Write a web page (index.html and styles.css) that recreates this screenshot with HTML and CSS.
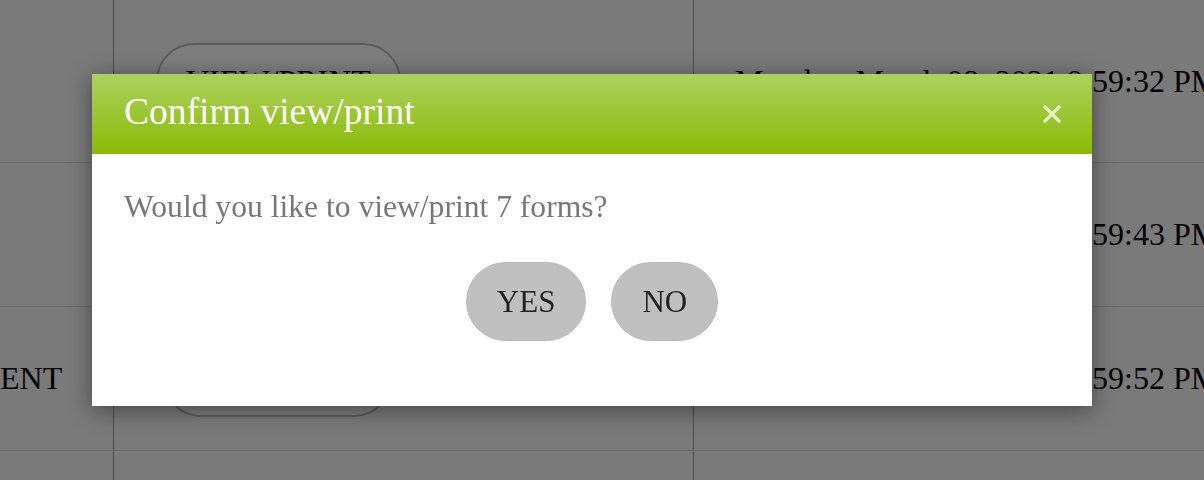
FILE: index.html
```html
<!DOCTYPE html>
<html lang="en">
<head>
<meta charset="utf-8">
<title>Confirm view/print</title>
<link rel="stylesheet" href="styles.css">
</head>
<body>
<div class="table">
  <div class="row row-first">
    <div class="cell c1"></div>
    <div class="cell c2"><span class="ghost-btn">VIEW/PRINT</span></div>
    <div class="cell c3">Monday, March 08, 2021 9:59:32 PM</div>
  </div>
  <div class="row">
    <div class="cell c1"></div>
    <div class="cell c2"><span class="ghost-btn">VIEW/PRINT</span></div>
    <div class="cell c3">Monday, March 08, 2021 9:59:43 PM</div>
  </div>
  <div class="row">
    <div class="cell c1 name">ENT</div>
    <div class="cell c2"><span class="ghost-btn alt">VIEW/PRINT</span></div>
    <div class="cell c3">Monday, March 08, 2021 9:59:52 PM</div>
  </div>
  <div class="row">
    <div class="cell c1"></div>
    <div class="cell c2"></div>
    <div class="cell c3"></div>
  </div>
</div>

<div class="overlay">
  <div class="modal">
    <div class="modal-header">
      <h2 class="modal-title">Confirm view/print</h2>
      <span class="close">
        <svg width="18" height="18" viewBox="0 0 18 18"><path d="M2 2 L16 16 M16 2 L2 16" stroke="#e4f0c8" stroke-width="3.2" stroke-linecap="square" fill="none"/></svg>
      </span>
    </div>
    <div class="modal-body">
      <p class="message">Would you like to view/print 7 forms?</p>
      <div class="actions">
        <button class="pill">YES</button>
        <button class="pill">NO</button>
      </div>
    </div>
  </div>
</div>
</body>
</html>
```

FILE: styles.css
```css
* { box-sizing: border-box; }
html, body {
  margin: 0;
  padding: 0;
  height: 100%;
  overflow: hidden;
}
body {
  background: #7a7a7a;
  font-family: "Liberation Serif", "Times New Roman", serif;
  color: #000;
}
.table {
  display: flex;
  flex-direction: column;
}
.row {
  display: grid;
  grid-template-columns: 114px 580px 1fr;
  height: 144px;
  border-bottom: 1px solid #686868;
}
.row-first { height: 163px; }
.cell {
  display: flex;
  align-items: center;
  font-size: 32px;
  white-space: nowrap;
  overflow: hidden;
}
.c1 { border-right: 1px solid #4c4c4c; }
.c2 { border-right: 1px solid #4c4c4c; padding-left: 42px; }
.c3 { padding-left: 41px; }
.name { padding-left: 0; }
.ghost-btn {
  display: inline-flex;
  align-items: center;
  height: 76px;
  padding: 0 28px;
  border: 2px solid #5c5c5c;
  border-radius: 38px;
  background: #7e7e7e;
  font-size: 32px;
}
.ghost-btn.alt { margin-left: 7px; padding: 0 20px; }

.overlay {
  position: fixed;
  inset: 0;
  display: flex;
  align-items: center;
  justify-content: center;
  padding-right: 20px;
}
.modal {
  width: 1000px;
  height: 332px;
  background: #fff;
  box-shadow: 0 4px 22px rgba(0, 0, 0, 0.45);
  display: flex;
  flex-direction: column;
}
.modal-header {
  height: 80px;
  background: linear-gradient(#acd15f, #8cba08);
  display: flex;
  align-items: center;
  justify-content: space-between;
  padding: 0 31px 4px 32px;
}
.modal-title {
  margin: 0;
  font-weight: normal;
  font-size: 37.5px;
  line-height: 44px;
  color: #fff;
}
.close {
  display: flex;
  width: 18px;
  height: 18px;
  margin-top: 3px;
}
.modal-body {
  padding: 35px 32px 0 32px;
}
.message {
  margin: 0;
  font-size: 31.6px;
  line-height: 36px;
  color: #777;
}
.actions {
  margin-top: 37px;
  display: flex;
  justify-content: center;
  gap: 25px;
}
.pill {
  height: 79px;
  padding: 0 30px;
  border: 1px solid #b8b8b8;
  border-radius: 40px;
  background: #c0c0c0;
  color: #222;
  font-family: "Liberation Serif", "Times New Roman", serif;
  font-size: 31px;
  line-height: 36px;
}
```
